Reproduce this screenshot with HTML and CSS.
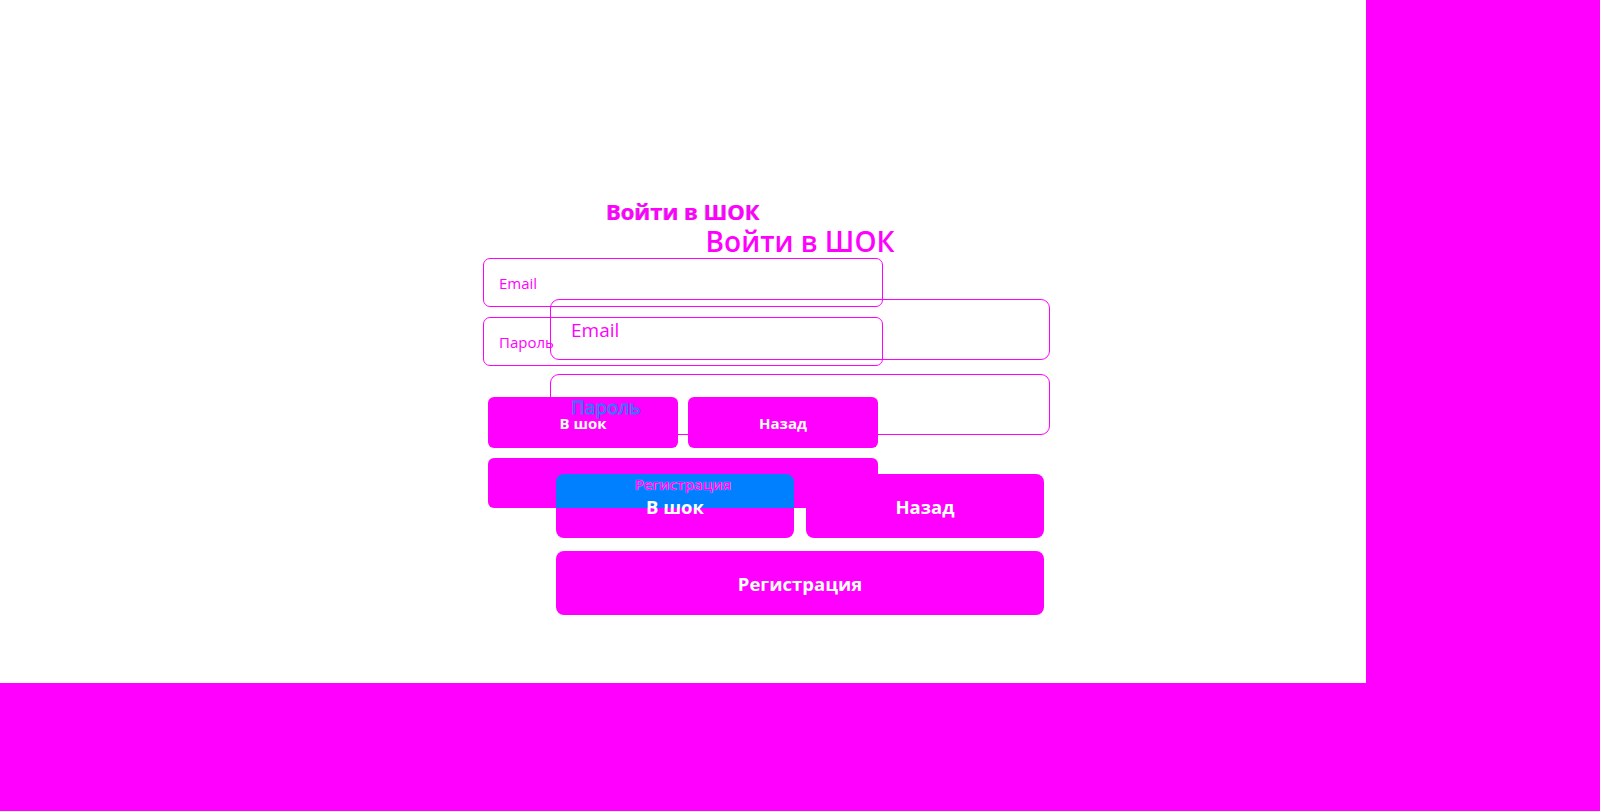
FILE: index.html
```html
<!DOCTYPE html>
<html lang="ru">
<head>
<meta charset="utf-8">
<title>Войти в ШОК</title>
<link rel="stylesheet" href="styles.css">
</head>
<body>
<div class="stage">
  <div class="form form-a">
    <h1 class="title title-a">Войти в ШОК</h1>
    <div class="field field-a"><span class="ph">Email</span></div>
    <div class="field field-a field-gap-a"><span class="ph">Пароль</span></div>
    <div class="row row-a">
      <div class="btn btn-a">В шок</div>
      <div class="btn btn-a">Назад</div>
    </div>
    <div class="btn btn-a btn-wide-a"><span class="label-top">Регистрация</span></div>
  </div>
</div>
<div class="overlay">
  <div class="form form-b">
    <h1 class="title title-b">Войти в ШОК</h1>
    <div class="field field-b"><span class="ph">Email</span></div>
    <div class="field field-b field-gap-b"><span class="ph ph-outline">Пароль</span></div>
    <div class="row row-b">
      <div class="btn btn-b btn-split">В шок</div>
      <div class="btn btn-b">Назад</div>
    </div>
    <div class="btn btn-b btn-wide-b">Регистрация</div>
  </div>
</div>
</body>
</html>
```
FILE: styles.css
```css
html, body {
  margin: 0;
  padding: 0;
}
body {
  width: 1600px;
  height: 811px;
  background: #ff00ff;
  font-family: "Open Sans", "Noto Sans", sans-serif;
  position: relative;
  overflow: hidden;
}
.stage {
  width: 1366px;
  height: 683px;
  background: #ffffff;
  display: flex;
  flex-direction: column;
  align-items: center;
  padding-top: 196px;
  box-sizing: border-box;
}
.form {
  display: flex;
  flex-direction: column;
}
.title {
  margin: 0;
  text-align: center;
  color: #ff00ff;
}
.title-a {
  font-size: 22px;
  line-height: 30px;
  font-weight: 700;
  margin-bottom: 32px;
  text-shadow: -1px 0 0 rgba(90, 60, 90, 0.45);
}
.field {
  box-sizing: border-box;
  border: 1px solid #ff00ff;
  display: flex;
  align-items: center;
  color: #ff00ff;
}
.form-a { width: 400px; }
.field-a {
  height: 49px;
  border-radius: 7px;
  padding-left: 15px;
  font-size: 15px;
  margin-top: 10px;
}
.title-a + .field-a { margin-top: 0; }
.field-gap-a { margin-bottom: 31px; }
.row {
  display: flex;
}
.row-a {
  gap: 10px;
  padding: 0 5px;
}
.btn {
  box-sizing: border-box;
  background: #ff00ff;
  color: #ffffff;
  font-weight: 700;
  display: flex;
  align-items: center;
  justify-content: center;
}
.btn-a {
  width: 190px;
  height: 51px;
  border-radius: 6px;
  font-size: 15px;
}
.btn-wide-a {
  width: 390px;
  height: 50px;
  margin: 10px 5px 0;
  align-items: flex-start;
  padding-top: 17px;
}
.label-top {
  position: relative;
  z-index: 5;
  color: #ff00ff;
  font-weight: 600;
  font-size: 15px;
  line-height: 18px;
  text-shadow: 0 0 1px #ffffff;
}

.overlay {
  position: absolute;
  top: 0;
  left: 0;
  width: 1600px;
  height: 811px;
  display: flex;
  flex-direction: column;
  align-items: center;
  padding-top: 222px;
  box-sizing: border-box;
  z-index: 2;
  pointer-events: none;
}
.form-b { width: 500px; }
.title-b {
  font-size: 28px;
  line-height: 38px;
  font-weight: 600;
  margin-bottom: 39px;
}
.field-b {
  height: 61px;
  border-radius: 9px;
  padding-left: 20px;
  font-size: 19px;
  margin-top: 14px;
}
.title-b + .field-b { margin-top: 0; }
.field-gap-b { margin-bottom: 39px; }
.ph-outline {
  color: #ff00ff;
  -webkit-text-stroke: 1px #1f7fff;
  position: relative;
  top: 2px;
}
.row-b {
  gap: 12px;
  padding: 0 6px;
}
.btn-b {
  width: 238px;
  height: 64px;
  border-radius: 8px;
  font-size: 18.5px;
}
.btn-split {
  background: linear-gradient(#007fff 0, #007fff 34px, #ff00ff 34px);
}
.btn-wide-b {
  width: 488px;
  margin: 13px 6px 0;
}
```
